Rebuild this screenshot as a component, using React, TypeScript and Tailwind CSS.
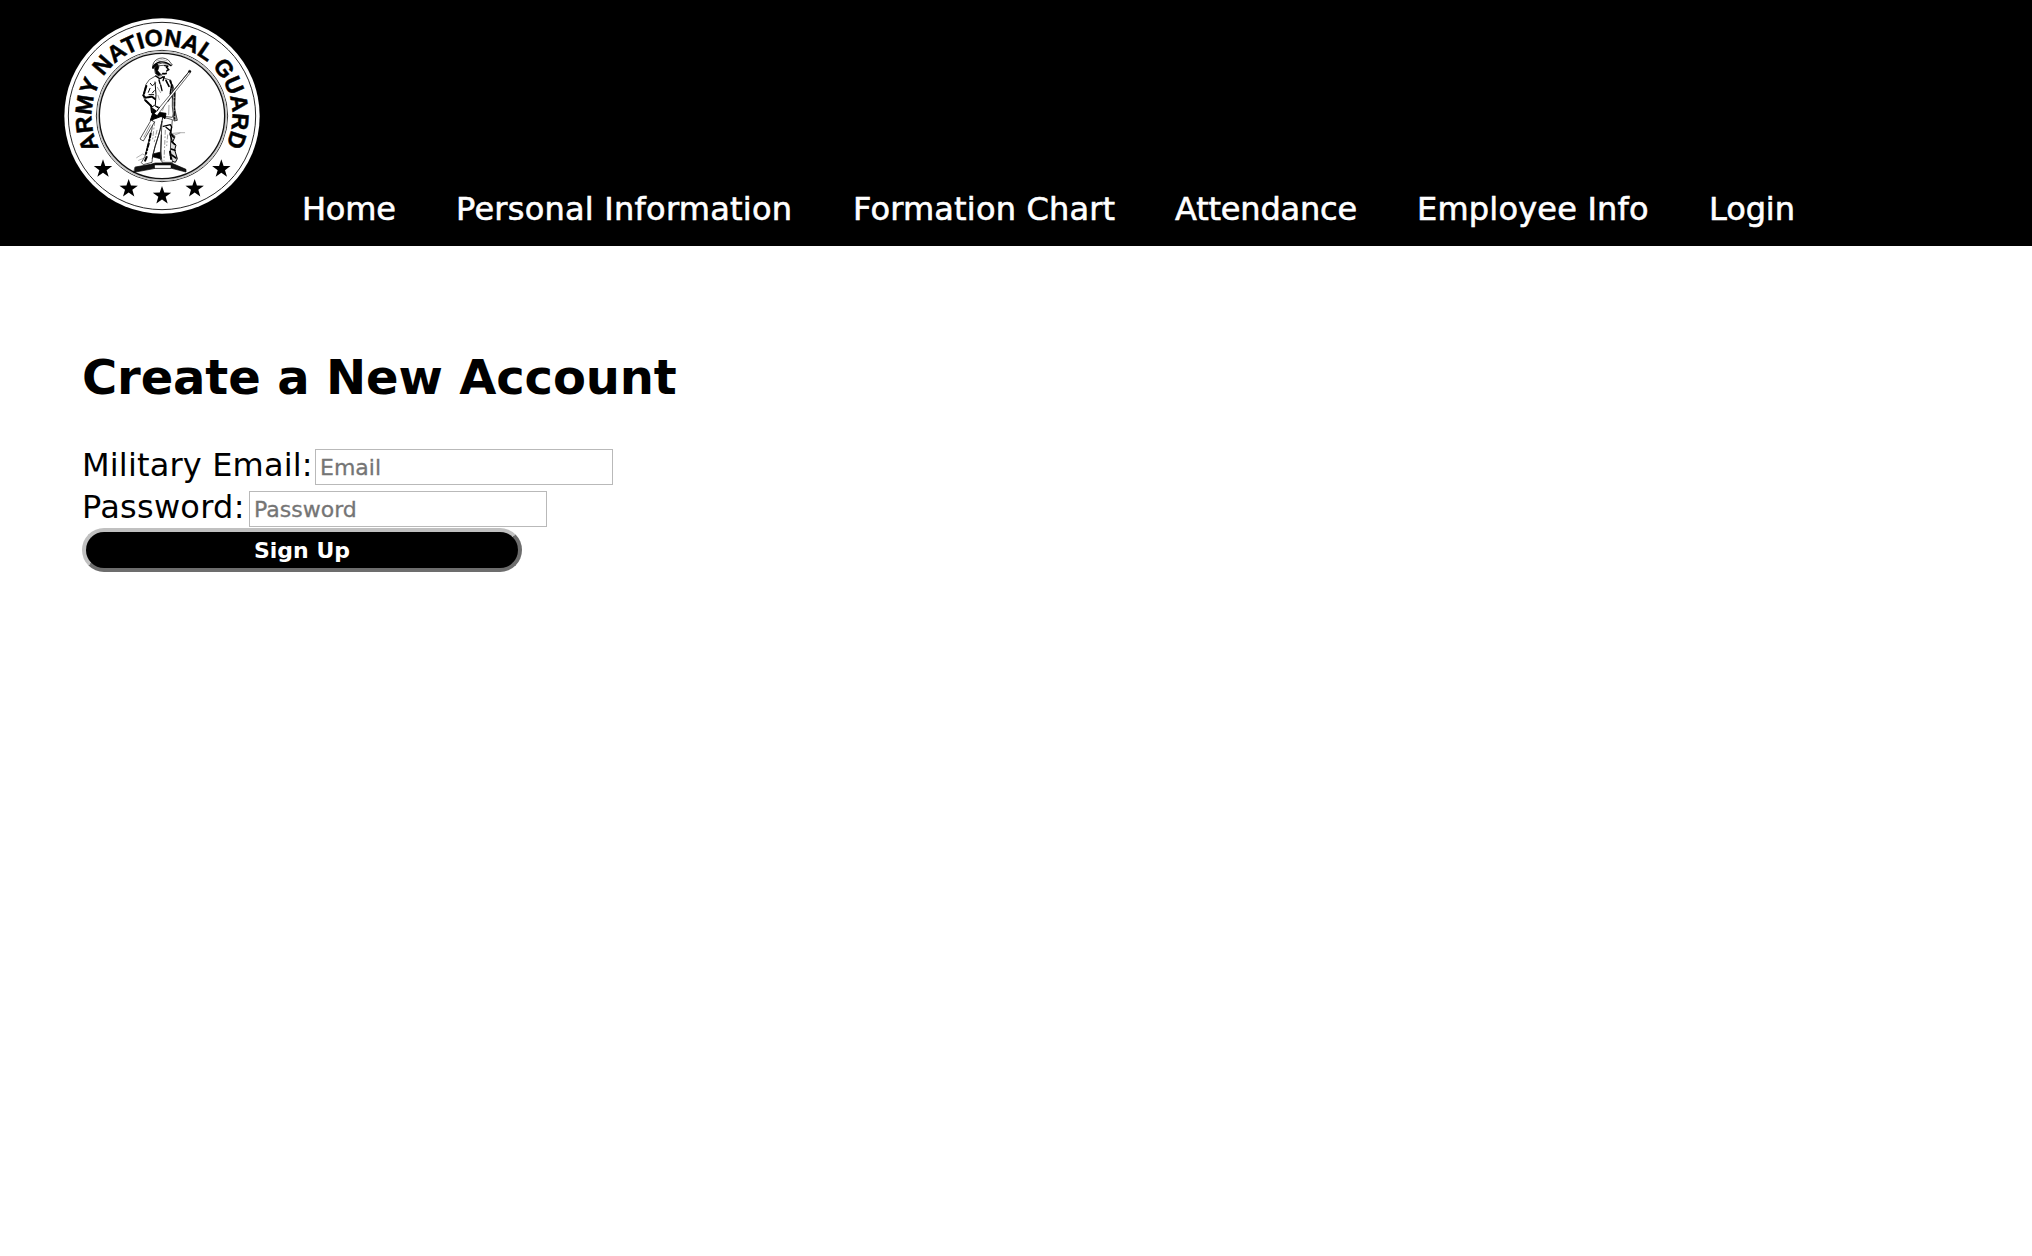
const stars = [
  [159, 507],
  [236, 566],
  [336, 587],
  [434, 566],
  [514, 507],
];

const starPath =
  'M0 -29 L6.8 -9.3 L27.6 -9 L11 3.6 L17 23.5 L0 11.5 L-17 23.5 L-11 3.6 L-27.6 -9 L-6.8 -9.3 Z';

function Soldier() {
  return (
    <g transform="translate(210 135)" stroke="#000" strokeLinejoin="round" strokeLinecap="round">
      {/* pedestal */}
      <path d="M46 366 L92 358 L106 354 H154 L198 373 V381 L155 370 H106 L42 382 Z" fill="#111" strokeWidth="2" />
      <path d="M104 360 H153 V370 H104 Z" fill="#fff" strokeWidth="1.5" />
      {/* plough and stump */}
      <path d="M50 338 L68 327 L82 334 M56 346 L70 340 M160 265 Q182 262 194 263 M164 270 L180 264" fill="none" stroke="#888" strokeWidth="2" />
      <path d="M152 262 L165 275 L158 291 L168 300 L164 315 L172 341 L166 352 L150 346 Z" fill="#ddd" strokeWidth="3" />
      <path d="M154 268 L160 276 M155 290 L164 298 M153 312 L165 316 M155 330 L168 339" strokeWidth="5" fill="none" />
      <path d="M86 330 L122 321 L124 342 L100 336 L88 342 Z" fill="#000" strokeWidth="2" />
      {/* legs */}
      <path d="M98 210 L96 252 L83 300 L75 334 L64 353 L70 359 L96 352 L98 330 L116 270 L126 228 L124 270 L122 318 L126 352 L158 352 L151 318 L153 270 L157 225 Z" fill="#fff" strokeWidth="2" />
      <path d="M128 218 L121 254 L105 304 L97 340 M124 270 L122 345" fill="none" stroke="#222" strokeWidth="3" />
      <path d="M92 266 L86 296 L78 326 M80 336 L74 350 M150 320 L154 347" fill="none" strokeWidth="6" strokeDasharray="12 6 4 7" />
      <path d="M104 230 L98 282 M111 256 L103 290 M136 256 L132 346 M143 270 L140 302" fill="none" stroke="#666" strokeWidth="2" strokeDasharray="12 7 3 8" />
      <path d="M130 244 L151 239 L155 246 L150 267 L157 290 M138 247 L152 258" fill="none" strokeWidth="4" />
      {/* rifle stock */}
      <path d="M93 226 L60 282 L70 288 L103 232 Z" fill="#fff" strokeWidth="2" />
      <path d="M91 240 L72 276" stroke="#666" strokeWidth="2" />
      {/* torso and arms */}
      <path d="M105 94 L88 104 L78 118 L69 151 L75 167 L94 184 L98 210 L157 217 L162 202 L160 139 L153 106 L134 100 L126 93 Z" fill="#fff" strokeWidth="2" />
      <path d="M70 151 L76 158 L96 155 L105 162 M76 166 L93 182 L96 202 M79 123 L72 146" fill="none" strokeWidth="6" strokeDasharray="15 3 9 4" />
      <path d="M105 111 L108 149 L106 180 M91 115 L97 122 M90 130 L85 142 M106 114 L99 121 M103 137 L97 144 M87 149 L101 149" fill="none" strokeWidth="3" />
      <path d="M150 107 L155 120 L151 145 L161 164 L161 184 M138 106 L147 124 M149 159 L143 169" fill="none" strokeWidth="5" strokeDasharray="10 3" />
      <path d="M158 120 L166 144 L164 190 L172 226 L162 228 L157 185 Z" fill="#aaa" strokeWidth="2" />
      <path d="M163 142 L164 222" stroke="#111" strokeWidth="4" strokeDasharray="12 6 5 6" />
      <path d="M107 93 L119 101 L133 95 L129 107 M117 105 L120 116 M122 120 L126 137" fill="none" strokeWidth="4" />
      <path d="M112 127 L122 143 M114 151 L118 164 M133 180 L128 196 M147 181 L146 209" fill="none" stroke="#777" strokeWidth="2" />
      <path d="M98 184 L113 202 L138 205 L135 221 L124 214 L103 222 L91 226 L99 202 Z" fill="#000" strokeWidth="3" />
      {/* rifle barrel */}
      <path d="M103 206 L140 162 L208 79 L212 82 L146 165 L112 211 Z" fill="#fff" strokeWidth="1.8" />
      <path d="M151 148 L207 80" stroke="#333" strokeWidth="3" />
      <circle cx="209" cy="79" r="3.5" fill="#000" />
      <path d="M95 187 L103 181 L116 190 L111 198 M107 183 L119 188" fill="#fff" strokeWidth="3" />
      {/* head and hat */}
      <path d="M108 64 L110 78 L121 88 L136 88 L142 75 L144 61 Z" fill="#fff" strokeWidth="2" />
      <path d="M104 69 L113 60 L117 65 L113 77 L122 88 L116 92 L107 86 Z" fill="#000" strokeWidth="2" />
      <path d="M98 68 Q97 51 111 43 Q128 34 145 45 L157 60 Q151 65 143 56 Q127 51 111 58 Z" fill="#fff" strokeWidth="2" />
      <path d="M98 67 Q104 55 119 51 Q138 48 153 62 M99 70 L112 58 M134 62 L143 64 M139 67 L147 74 L141 77 M128 85 L139 86" fill="none" strokeWidth="4" />
      <path d="M109 48 Q126 40 141 47" fill="none" stroke="#999" strokeWidth="2" />
    </g>
  );
}

function Seal() {
  return (
    <svg viewBox="42 54 588 588" className="mt-[18px] h-[196px] w-[196px] shrink-0" role="img" aria-label="Army National Guard">
      <circle cx="336" cy="348" r="293" fill="#fff" />
      <circle cx="336" cy="348" r="281" fill="none" stroke="#222" strokeWidth="3" />
      <circle cx="336" cy="348" r="197" fill="none" stroke="#333" strokeWidth="3" />
      <circle cx="336" cy="348" r="192" fill="none" stroke="#ccc" strokeWidth="6" />
      <circle cx="336" cy="348" r="188" fill="none" stroke="#111" strokeWidth="4" />
      <path id="sealArc" d="M148 443.8 A211 211 0 1 1 526.6 438.5" fill="none" />
      <text fontFamily="Liberation Sans, Arial, sans-serif" fontWeight="700" fontSize="70" fill="#000" stroke="#000" strokeWidth="1.5">
        <textPath href="#sealArc" textLength="853" lengthAdjust="spacing">
          ARMY NATIONAL GUARD
        </textPath>
      </text>
      {stars.map(([x, y]) => (
        <path key={x} d={starPath} transform={`translate(${x} ${y})`} />
      ))}
      <Soldier />
    </svg>
  );
}

const links = [
  { label: 'Home', style: 'w-[154px] tracking-[-0.2px]' },
  { label: 'Personal Information', style: 'w-[397px] tracking-[0.24px]' },
  { label: 'Formation Chart', style: 'w-[322px] tracking-[0.18px]' },
  { label: 'Attendance', style: 'w-[242px] tracking-[-0.2px]' },
  { label: 'Employee Info', style: 'w-[292px] tracking-[0.2px]' },
  { label: 'Login', style: 'tracking-[-0.1px]' },
];

export default function App() {
  return (
    <div className="min-h-[1256px] bg-white font-['Verdana','DejaVu_Sans',sans-serif] text-[32px] text-black">
      <header className="flex h-[246px] bg-black pl-16 text-white">
        <Seal />
        <nav className="flex items-end pb-[18px] pl-[42px] leading-[38px] [-webkit-text-stroke:0.6px_white]">
          {links.map((link) => (
            <a key={link.label} href="#" className={`block whitespace-nowrap ${link.style}`}>
              {link.label}
            </a>
          ))}
        </nav>
      </header>
      <main className="pl-[82px] pt-[102px]">
        <h1 className="whitespace-nowrap text-[48px] font-bold leading-[58px] tracking-[-0.13px]">Create a New Account</h1>
        <form className="mt-[43px]">
          <div className="flex h-[42px]">
            <label htmlFor="email" className="w-[233px] whitespace-nowrap leading-[33px] tracking-[0.17px]">Military Email:</label>
            <input
              id="email"
              placeholder="Email"
              className="h-9 w-[298px] border border-[#b9b9b9] bg-white px-1 pt-px text-[22px] placeholder:text-[#757575] [-webkit-text-stroke:0.3px_#757575]"
            />
          </div>
          <div className="flex h-[37px]">
            <label htmlFor="password" className="w-[167px] whitespace-nowrap leading-[33px] tracking-[0.27px]">Password:</label>
            <input
              id="password"
              type="password"
              placeholder="Password"
              className="h-9 w-[298px] border border-[#b9b9b9] bg-white px-1 pt-px text-[22px] placeholder:text-[#757575] [-webkit-text-stroke:0.3px_#757575]"
            />
          </div>
          <button
            type="button"
            className="block h-11 w-[440px] rounded-[22px] border-4 border-b-[#6d6d6d] border-l-[#c0c0c0] border-r-[#6d6d6d] border-t-[#c0c0c0] bg-black pt-px text-[22px] font-bold leading-[34px] text-white"
          >
            Sign Up
          </button>
        </form>
      </main>
    </div>
  );
}
